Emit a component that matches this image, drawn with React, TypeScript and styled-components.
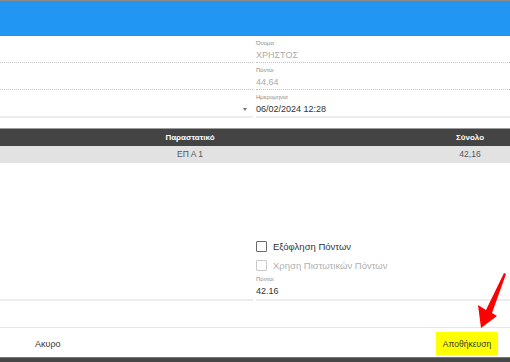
import styled, { createGlobalStyle } from "styled-components";

const GlobalStyle = createGlobalStyle`
  html, body {
    margin: 0;
    padding: 0;
    background: #fff;
  }
  body {
    font-family: "Liberation Sans", Arial, sans-serif;
  }
`;

const Screen = styled.div`
  position: relative;
  width: 510px;
  height: 362px;
  overflow: hidden;
  display: flex;
  flex-direction: column;
  background: #fff;
`;

const TopBar = styled.div`
  flex: none;
  height: 35px;
  border-top: 1px solid #8a8a8a;
  background: #2196f3;
`;

const Columns = styled.div`
  flex: none;
  display: grid;
  grid-template-columns: 253px 1fr;
  column-gap: 3px;
`;

const Column = styled.div`
  display: flex;
  flex-direction: column;
`;

const Field = styled.div<{ $last?: boolean }>`
  box-sizing: border-box;
  height: ${(p) => (p.$last ? "28px" : "27px")};
  padding-top: 2px;
  border-bottom: ${(p) => (p.$last ? "2px solid #ececec" : "1px dotted #c4c4c4")};
`;

const Label = styled.div`
  height: 10px;
  line-height: 10px;
  font-size: 6px;
  color: #8a8a8a;
`;

const Value = styled.div<{ $muted?: boolean }>`
  display: flex;
  align-items: center;
  height: 14px;
  font-size: 9px;
  color: ${(p) => (p.$muted ? "#ababab" : "#333")};
`;

const SelectValue = styled(Value)`
  justify-content: flex-end;
  padding-right: 6px;
`;

const Caret = styled.span`
  width: 0;
  height: 0;
  border-left: 2.5px solid transparent;
  border-right: 2.5px solid transparent;
  border-top: 3px solid #777;
`;

const TableHead = styled.div`
  flex: none;
  margin-top: 10px;
  display: grid;
  grid-template-columns: 380px 80px;
  column-gap: 50px;
  height: 17px;
  border-top: 1px solid #9c9c9c;
  background: #444;
  color: #fff;
  font-size: 8px;
  font-weight: bold;
  line-height: 17px;
  text-align: center;
`;

const TableRow = styled.div`
  flex: none;
  display: grid;
  grid-template-columns: 380px 80px;
  column-gap: 50px;
  height: 17px;
  background: #e2e2e2;
  color: #555;
  font-size: 8.5px;
  line-height: 17px;
  text-align: center;
`;

const Filler = styled.div`
  flex: 1;
`;

const BottomColumns = styled(Columns)`
  align-items: end;
`;

const Underline = styled.div`
  border-bottom: 2px solid #ececec;
`;

const CheckRow = styled.label<{ $h: number; $disabled?: boolean }>`
  display: flex;
  align-items: center;
  gap: 6px;
  height: ${(p) => p.$h}px;
  font-size: 9.5px;
  color: ${(p) => (p.$disabled ? "#b0b0b0" : "#333")};
`;

const Box = styled.span<{ $disabled?: boolean }>`
  box-sizing: border-box;
  width: 11px;
  height: 11px;
  border: 1.5px solid ${(p) => (p.$disabled ? "#c9c9c9" : "#6b6b6b")};
  border-radius: 1px;
`;

const PointsField = styled.div`
  padding-bottom: 1px;
  border-bottom: 2px solid #ececec;
`;

const Spacer = styled.div`
  flex: none;
  height: 26px;
`;

const Footer = styled.div`
  flex: none;
  box-sizing: border-box;
  height: 30px;
  padding: 2px 12px 0 35px;
  display: flex;
  align-items: center;
  justify-content: space-between;
  border-top: 1px solid #e6e6e6;
  font-size: 9px;
  color: #333;
`;

const SaveButton = styled.div`
  width: 62px;
  height: 23px;
  display: flex;
  align-items: center;
  justify-content: center;
  background: #ffff00;
  font-size: 8.5px;
  color: #333;
`;

const BottomBar = styled.div`
  flex: none;
  height: 4px;
  border-top: 1px solid #777;
  background: #474747;
`;

const Arrow = styled.svg`
  position: absolute;
  left: 470px;
  top: 265px;
`;

export default function App() {
  return (
    <Screen>
      <GlobalStyle />
      <TopBar />
      <Columns>
        <Column>
          <Field />
          <Field />
          <Field $last>
            <Label />
            <SelectValue>
              <Caret />
            </SelectValue>
          </Field>
        </Column>
        <Column>
          <Field>
            <Label>Όνομα</Label>
            <Value $muted>ΧΡΗΣΤΟΣ</Value>
          </Field>
          <Field>
            <Label>Πόντοι</Label>
            <Value $muted>44.64</Value>
          </Field>
          <Field $last>
            <Label>Ημερομηνία</Label>
            <Value>06/02/2024 12:28</Value>
          </Field>
        </Column>
      </Columns>

      <TableHead>
        <div>Παραστατικό</div>
        <div>Σύνολο</div>
      </TableHead>
      <TableRow>
        <div>ΕΠ Α 1</div>
        <div>42,16</div>
      </TableRow>

      <Filler />

      <BottomColumns>
        <Underline />
        <Column>
          <CheckRow $h={20}>
            <Box />
            Εξόφληση Πόντων
          </CheckRow>
          <CheckRow $h={18} $disabled>
            <Box $disabled />
            Χρηση Πιστωτικών Πόντων
          </CheckRow>
          <PointsField>
            <Label>Πόντοι</Label>
            <Value>42.16</Value>
          </PointsField>
        </Column>
      </BottomColumns>

      <Spacer />
      <Footer>
        <span>Ακυρο</span>
        <SaveButton>Αποθήκευση</SaveButton>
      </Footer>
      <BottomBar />

      <Arrow width="40" height="66" viewBox="0 0 40 66">
        <polygon
          points="34,8 36,9 22,48 27,51 11,63 8,40 16,45"
          fill="#ff0000"
        />
      </Arrow>
    </Screen>
  );
}
